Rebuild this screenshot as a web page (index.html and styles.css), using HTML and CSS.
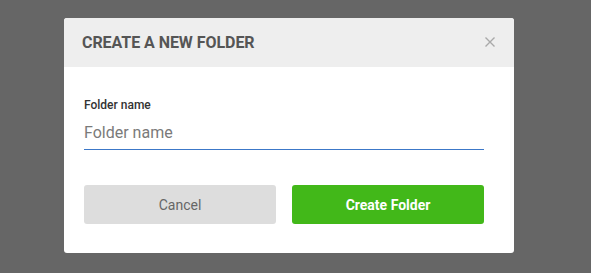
FILE: index.html
```html
<!DOCTYPE html>
<html>
<head>
<meta charset="utf-8">
<link rel="stylesheet" href="styles.css">
</head>
<body>
<div class="overlay">
  <div class="modal">
    <div class="modal-header">
      <h2 class="modal-title">CREATE A NEW FOLDER</h2>
      <button class="close" aria-label="Close">
        <svg width="10" height="10" viewBox="0 0 10 10"><path d="M0.5 0.5 L9.5 9.5 M9.5 0.5 L0.5 9.5" stroke="#a9a9a9" stroke-width="1.4" fill="none"/></svg>
      </button>
    </div>
    <div class="modal-body">
      <label class="field-label" for="fname">Folder name</label>
      <input id="fname" class="field-input" type="text" placeholder="Folder name">
      <div class="actions">
        <button class="btn btn-cancel">Cancel</button>
        <button class="btn btn-create">Create Folder</button>
      </div>
    </div>
  </div>
</div>
</body>
</html>
```

FILE: styles.css
```css
html, body {
  margin: 0;
  padding: 0;
  height: 100%;
  background: #666666;
  font-family: Roboto, "Liberation Sans", Arial, sans-serif;
}
.overlay {
  padding: 18px 0 0 64px;
}
.modal {
  width: 450px;
  height: 235px;
  background: #ffffff;
  border-radius: 3px;
  overflow: hidden;
  box-sizing: border-box;
}
.modal-header {
  height: 49px;
  background: #eeeeee;
  display: flex;
  align-items: center;
  justify-content: space-between;
  padding: 0 19px 0 18px;
}
.modal-title {
  margin: 0;
  font-size: 16px;
  font-weight: 700;
  color: #555555;
  letter-spacing: -0.05px;
}
.close {
  border: 0;
  background: none;
  padding: 0;
  width: 10px;
  height: 10px;
  display: flex;
  margin-top: -2px;
}
.modal-body {
  padding: 31px 30px 0 20px;
  display: flex;
  flex-direction: column;
}
.field-label {
  font-size: 12px;
  font-weight: 500;
  color: #333333;
  line-height: 14px;
  margin-bottom: 7px;
}
.field-input {
  font-family: inherit;
  font-size: 16px;
  line-height: 19px;
  padding: 4px 0 7px 0;
  border: 0;
  border-bottom: 1px solid #3c78c8;
  outline: none;
  color: #333;
  background: transparent;
}
.field-input::placeholder {
  color: #7a7a7a;
}
.actions {
  display: flex;
  gap: 16px;
  margin-top: 35px;
}
.btn {
  flex: 1;
  height: 39px;
  border: 0;
  border-radius: 3px;
  font-family: inherit;
  font-size: 14px;
}
.btn-cancel {
  background: #dddddd;
  color: #666666;
}
.btn-create {
  background: #42b819;
  color: #ffffff;
  font-weight: 700;
}
```
